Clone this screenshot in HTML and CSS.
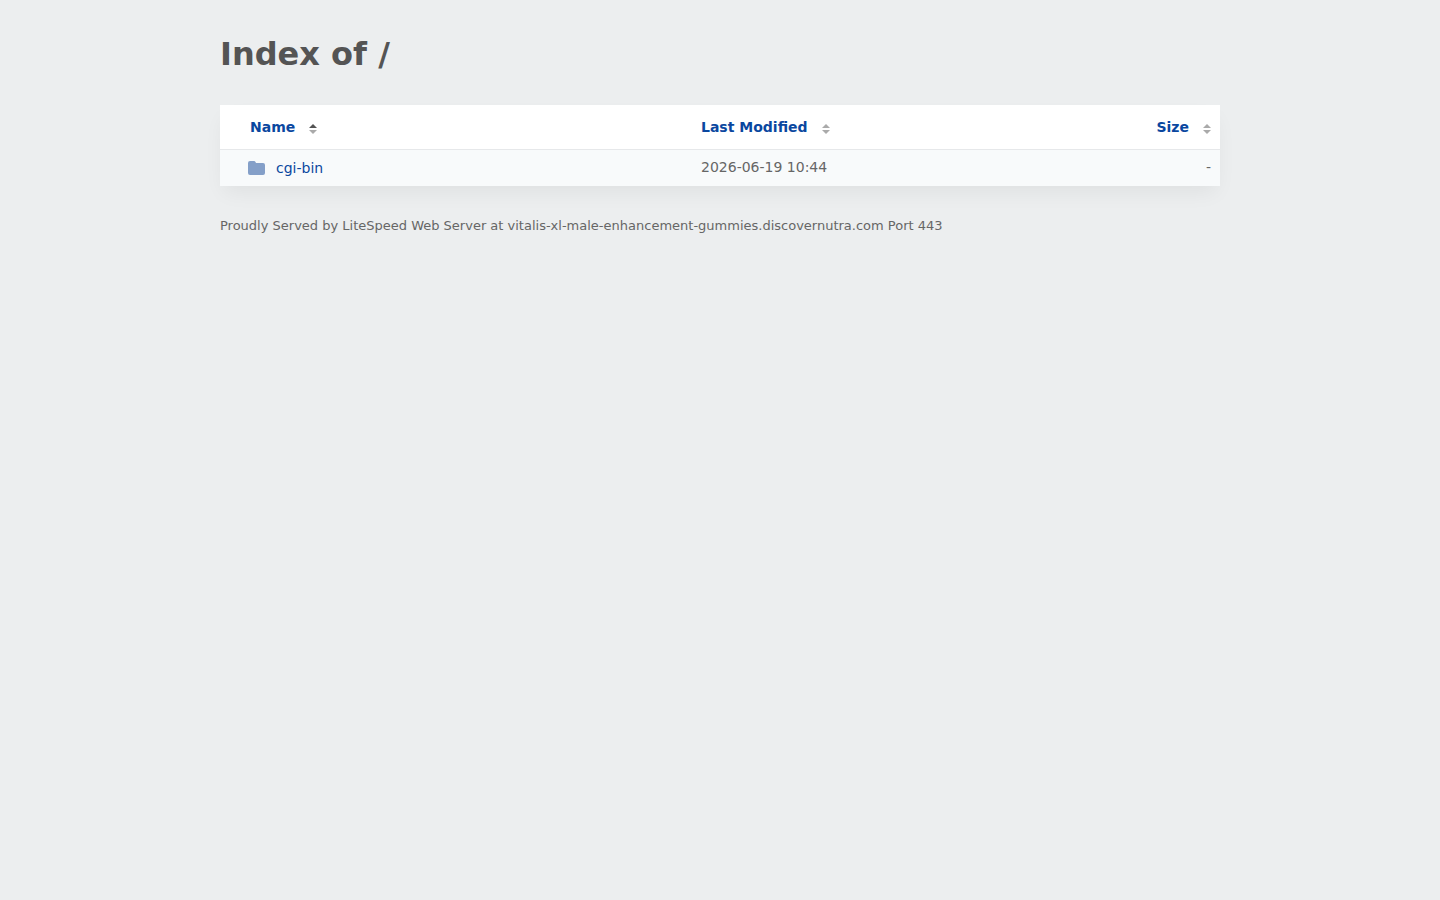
FILE: index.html
```html
<!DOCTYPE html>
<html lang="en">
<head>
    <meta charset="UTF-8">
    <meta name="viewport" content="width=device-width, initial-scale=1.0">
    <title>Index of /</title>
    <link rel="stylesheet" href="styles.css">
</head>
<body>

    <div class="content">
        <h1>Index of /</h1>

        <table id="table-content">
            <thead>
                <tr>
                    <th class="col-name" aria-sort="ascending">
                        <button type="button" data-sort="name">Name
                            <svg class="sort" viewBox="0 0 8 10" aria-hidden="true"><path class="up" d="M0 4L4 0l4 4z"/><path class="down" d="M0 6h8l-4 4z"/></svg>
                        </button>
                    </th>
                    <th class="col-date">
                        <button type="button" data-sort="date">Last Modified
                            <svg class="sort" viewBox="0 0 8 10" aria-hidden="true"><path class="up" d="M0 4L4 0l4 4z"/><path class="down" d="M0 6h8l-4 4z"/></svg>
                        </button>
                    </th>
                    <th class="col-size">
                        <button type="button" data-sort="size">Size
                            <svg class="sort" viewBox="0 0 8 10" aria-hidden="true"><path class="up" d="M0 4L4 0l4 4z"/><path class="down" d="M0 6h8l-4 4z"/></svg>
                        </button>
                    </th>
                </tr>
            </thead>
            <tbody>
                <tr>
                    <td class="col-name">
                        <a href="/cgi-bin/">
                            <svg class="folder" viewBox="0 0 17 14" aria-hidden="true"><path d="M0 2Q0 0 2 0h4Q7 0 7.500 1L8 2h7Q17 2 17 4v8q0 2-2 2H2Q0 14 0 12z"/></svg>
                            cgi-bin
                        </a>
                    </td>
                    <td class="col-date">2026-06-19 10:44</td>
                    <td class="col-size">-</td>
                </tr>
            </tbody>
        </table>

        <footer>Proudly Served by LiteSpeed Web Server at vitalis-xl-male-enhancement-gummies.discovernutra.com Port 443</footer>
    </div>

</body>
</html>
```
FILE: styles.css
```css
body {
    margin: 0;
    padding: 0 20px;
    background-color: #eceeef;
    color: #545454;
    font-family: "DejaVu Sans", sans-serif;
    font-size: 14px;
    line-height: 20px;
}
.content {
    max-width: 1000px;
    margin: 0 auto;
    padding: 32px 0;
}
h1 {
    margin: 0 0 29px;
    font-size: 32px;
    line-height: 44px;
}
table {
    width: 100%;
    table-layout: fixed;
    border-collapse: collapse;
    background: #fff;
    box-shadow: 0 10px 20px -4px rgba(0, 0, 0, 0.06);
}
th, td {
    padding: 7px 9px 8px 11px;
    text-align: left;
}
th {
    padding-top: 12px;
    padding-bottom: 12px;
    border-bottom: 1px solid #e6e8ea;
}
tbody tr {
    background: #f8fafb;
}
td {
    color: #666;
}
th.col-name {
    width: 47%;
    padding-left: 30px;
    box-sizing: border-box;
}
td.col-name {
    padding: 8px 9px 8px 28px;
}
.col-date {
    width: 30%;
}
td.col-date, td.col-size {
    vertical-align: top;
}
th.col-size, td.col-size {
    text-align: right;
}
button {
    display: inline-flex;
    align-items: center;
    gap: 14px;
    padding: 0;
    border: none;
    background: none;
    color: #0a479f;
    font: inherit;
    font-weight: bold;
    cursor: pointer;
}
.sort {
    width: 8px;
    height: 10px;
    margin-top: 4px;
    fill: #aaa;
}
th[aria-sort="ascending"] .up {
    fill: #545454;
}
a {
    display: flex;
    align-items: center;
    gap: 11px;
    color: #0a479f;
    text-decoration: none;
}
a:hover {
    text-decoration: underline;
}
.folder {
    width: 17px;
    height: 14px;
    fill: #849fc8;
}
footer {
    margin-top: 30px;
    color: #666;
    font-size: 13px;
}
```
